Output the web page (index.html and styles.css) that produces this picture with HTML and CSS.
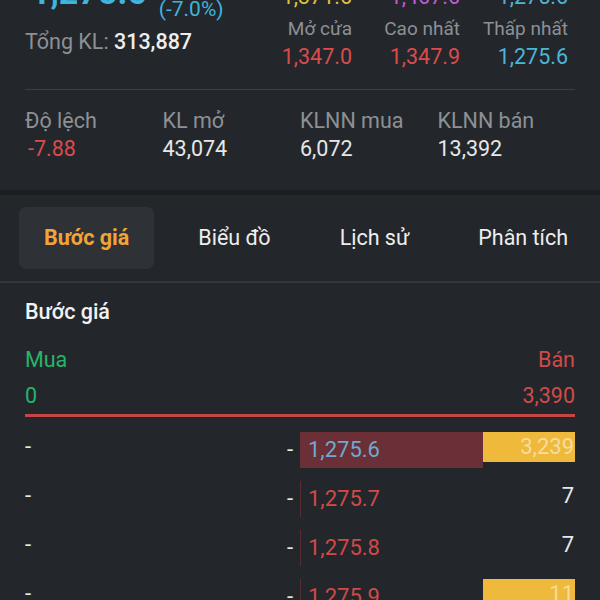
FILE: index.html
```html
<!DOCTYPE html>
<html>
<head>
	<meta charset="utf-8">
	<title>Bước giá</title>
	<link rel="stylesheet" href="styles.css">
</head>
<body>
	<section class="summary">
		<div class="summary-top">
			<div class="quote-box">
				<div class="quote">
					<span class="last">1,275.6</span>
					<div class="change">
						<span>-96.0</span>
						<span>(-7.0%)</span>
					</div>
				</div>
				<div class="volume">Tổng KL: <b>313,887</b></div>
			</div>
			<div class="ref-grid">
				<span class="ref">1,371.6</span>
				<span class="ceil">1,467.6</span>
				<span class="floor">1,275.6</span>
				<span class="label">Mở cửa</span>
				<span class="label">Cao nhất</span>
				<span class="label">Thấp nhất</span>
				<span class="down">1,347.0</span>
				<span class="down">1,347.9</span>
				<span class="floor">1,275.6</span>
			</div>
		</div>
		<div class="stat-grid">
			<span class="label">Độ lệch</span>
			<span class="label">KL mở</span>
			<span class="label">KLNN mua</span>
			<span class="label">KLNN bán</span>
			<span class="down basis">-7.88</span>
			<span>43,074</span>
			<span>6,072</span>
			<span>13,392</span>
		</div>
	</section>

	<nav class="tabs">
		<span class="tab active">Bước giá</span>
		<span class="tab">Biểu đồ</span>
		<span class="tab">Lịch sử</span>
		<span class="tab">Phân tích</span>
	</nav>

	<section class="book">
		<h2>Bước giá</h2>
		<div class="side-row">
			<span class="buy">Mua</span>
			<span class="sell">Bán</span>
		</div>
		<div class="side-row totals">
			<span class="buy">0</span>
			<span class="sell">3,390</span>
		</div>
		<div class="ratio"></div>

		<div class="rows">
			<div class="row">
				<span class="bv">-</span>
				<span class="bp">-</span>
				<span class="sp match">1,275.6</span>
				<span class="sv hl">3,239</span>
			</div>
			<div class="row">
				<span class="bv">-</span>
				<span class="bp">-</span>
				<span class="sp">1,275.7</span>
				<span class="sv">7</span>
			</div>
			<div class="row">
				<span class="bv">-</span>
				<span class="bp">-</span>
				<span class="sp">1,275.8</span>
				<span class="sv">7</span>
			</div>
			<div class="row">
				<span class="bv">-</span>
				<span class="bp">-</span>
				<span class="sp">1,275.9</span>
				<span class="sv hl">11</span>
			</div>
		</div>
	</section>
</body>
</html>
```

FILE: styles.css
```css
body {
	margin: 0;
	height: 600px;
	overflow: hidden;
	font-family: Roboto, "Noto Sans", sans-serif;
	font-size: 21.5px;
	color: #e6e7e8;
	background-color: #23272b;
}
.label {
	color: #8d9095;
}
.down {
	color: #dc4a4c;
}
.floor {
	color: #4bb6d8;
}
.ref {
	color: #e4bf3c;
}
.ceil {
	color: #c45ad4;
}

/* top summary */
.summary {
	padding: 0 25px;
	border-bottom: 5px solid #1b1e21;
}
.summary-top {
	display: flex;
	justify-content: space-between;
	align-items: flex-start;
	margin-top: -24px;
	padding-bottom: 18px;
	border-bottom: 1px solid #3a3e43;
}
.quote-box {
	margin-top: -4px;
}
.quote {
	display: flex;
	align-items: flex-end;
	gap: 12px;
	color: #3fb4dc;
}
.last {
	font-size: 34px;
	font-weight: bold;
	line-height: 40px;
	margin: 0 0 8px 6px;
}
.change {
	display: flex;
	flex-direction: column;
	font-size: 21px;
	line-height: 22px;
}
.volume {
	margin-top: 8px;
	line-height: 28px;
	color: #8d9095;
}
.volume b {
	color: #eeeeee;
	font-weight: 500;
}
.ref-grid {
	display: grid;
	grid-template-columns: repeat(3, 108px);
	grid-template-rows: 36px 28px 28px;
	justify-items: end;
	align-items: center;
	line-height: 28px;
	padding-top: 3px;
	margin-right: 7px;
}
.ref-grid .label {
	font-size: 19px;
}
.stat-grid {
	display: grid;
	grid-template-columns: repeat(4, 1fr);
	line-height: 28px;
	padding: 17px 0 27px;
}
.basis {
	padding-left: 3px;
}

/* tabs */
.tabs {
	display: flex;
	gap: 19px;
	padding: 12px 19px;
	border-bottom: 2px solid #33373b;
	white-space: nowrap;
}
.tab {
	flex-shrink: 0;
	padding: 0 25px;
	line-height: 62px;
	color: #eeeeee;
	border-radius: 7px;
}
.tab.active {
	color: #f2a437;
	font-weight: bold;
	background-color: #2e3237;
}

/* order book */
.book {
	padding: 15px 25px 0;
}
.book h2 {
	margin: 0;
	font-size: 21.5px;
	font-weight: 500;
	line-height: 28px;
	color: #f2f2f2;
}
.side-row {
	display: flex;
	justify-content: space-between;
	line-height: 28px;
	margin-top: 20px;
}
.side-row.totals {
	margin-top: 8px;
}
.buy {
	color: #27b46a;
}
.sell {
	color: #d04b48;
}
.ratio {
	height: 3px;
	margin-top: 4px;
	background-color: #c94545;
}
.rows {
	margin-top: 15px;
}
.row {
	display: grid;
	grid-template-columns: 92px 1fr 1fr 92px;
	align-items: start;
	margin-bottom: 13px;
	font-size: 22px;
}
.bv, .sv {
	line-height: 30px;
}
.bp {
	line-height: 36px;
	text-align: right;
	padding-right: 7px;
}
.sp {
	line-height: 36px;
	padding-left: 7px;
	color: #d14a45;
	border-left: 1px solid #5a2c31;
}
.sp.match {
	color: #6ea9d3;
	background-color: #6a2f37;
	border-left-color: #6a2f37;
}
.sv {
	text-align: right;
	padding-right: 1px;
}
.sv.hl {
	color: #f7dc9e;
	background-color: #efb93b;
}
```
